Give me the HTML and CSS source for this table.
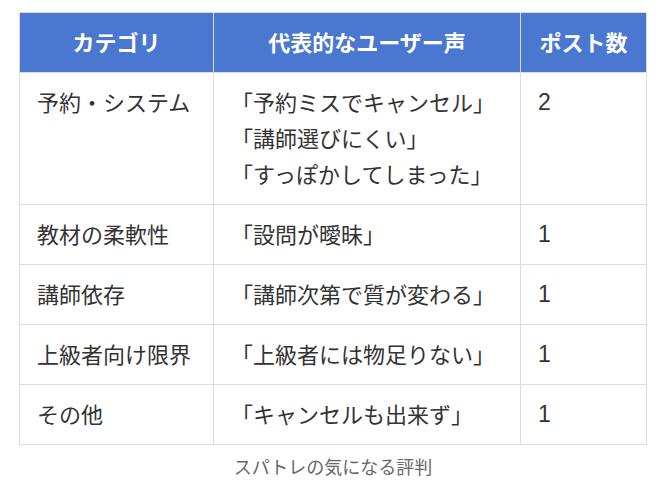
FILE: index.html
```html
<!DOCTYPE html>
<html lang="ja">
<head>
<meta charset="utf-8">
<link rel="stylesheet" href="styles.css">
</head>
<body>
<div class="wrap">
<table class="voice-table">
  <caption class="voice-caption">スパトレの気になる評判</caption>
  <colgroup>
    <col class="c1"><col class="c2"><col class="c3">
  </colgroup>
  <thead>
    <tr><th>カテゴリ</th><th>代表的なユーザー声</th><th>ポスト数</th></tr>
  </thead>
  <tbody>
    <tr><td>予約・システム</td><td>「予約ミスでキャンセル」<br>「講師選びにくい」<br>「すっぽかしてしまった」</td><td class="num">2</td></tr>
    <tr><td>教材の柔軟性</td><td>「設問が曖昧」</td><td class="num">1</td></tr>
    <tr><td>講師依存</td><td>「講師次第で質が変わる」</td><td class="num">1</td></tr>
    <tr><td>上級者向け限界</td><td>「上級者には物足りない」</td><td class="num">1</td></tr>
    <tr><td>その他</td><td>「キャンセルも出来ず」</td><td class="num">1</td></tr>
  </tbody>
</table>
</div>
</body>
</html>
```

FILE: styles.css
```css
html, body {
  margin: 0;
  padding: 0;
  background: #ffffff;
}
body {
  font-family: "Noto Sans CJK JP", "Noto Sans", sans-serif;
  color: #333333;
}
.wrap {
  padding: 12px 0 0 19px;
}
.voice-table {
  border-collapse: collapse;
  width: 627px;
  table-layout: fixed;
  font-size: 22px;
  line-height: 36px;
}
.c1 { width: 194px; }
.c2 { width: 307px; }
.c3 { width: 126px; }
.voice-table th,
.voice-table td {
  border: 1px solid #dddddd;
  padding: 10px 17px 13px;
  vertical-align: top;
  text-align: left;
  font-weight: 400;
  white-space: nowrap;
}
.voice-table th {
  background: #4a78d0;
  color: #ffffff;
  font-weight: 700;
  text-align: center;
  vertical-align: middle;
}
.voice-table .num {
  font-family: "Liberation Sans", "Noto Sans CJK JP", sans-serif;
  font-size: 23px;
  padding-top: 11px;
  padding-bottom: 12px;
}
.voice-caption {
  caption-side: bottom;
  font-size: 18px;
  line-height: 27px;
  color: #666666;
  padding-top: 8px;
  text-align: center;
}
```
